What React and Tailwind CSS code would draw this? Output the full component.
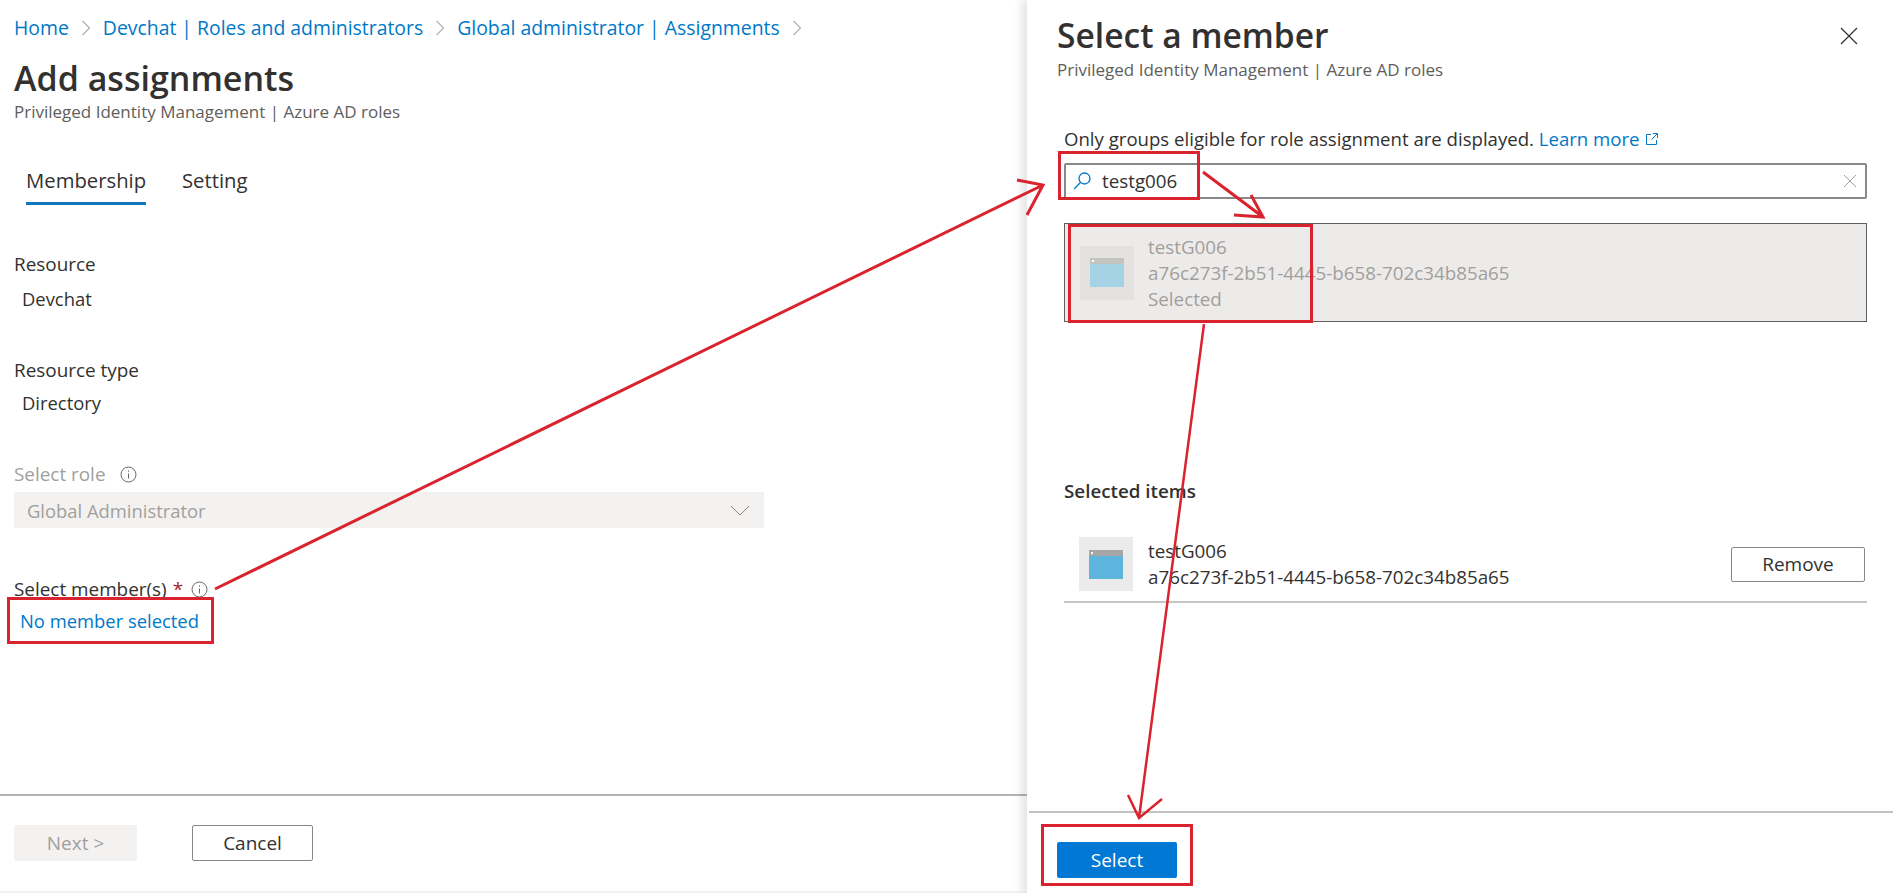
const RED = "#d9232e";

function Tile({ faded }) {
  return (
    <div className={`w-[54px] h-[54px] shrink-0 flex items-center justify-center ${faded ? "bg-[#e3e2e0]" : "bg-[#ebebeb]"}`}>
      <svg width="34" height="29" viewBox="0 0 34 29">
        <rect width="34" height="29" fill={faded ? "#a6d2e6" : "#5db4dd"} />
        <rect width="34" height="6" fill={faded ? "#c3c3c2" : "#a6a6a6"} />
        <rect x="2" y="2" width="2" height="2" fill="#fff" />
      </svg>
    </div>
  );
}

function Info({ className }) {
  return (
    <svg className={className} width="17" height="17" viewBox="0 0 17 17" fill="none" stroke="#666">
      <circle cx="8.5" cy="8.5" r="7.5" />
      <path d="M8.5 7.5v5M8.5 4.5v1.2" />
    </svg>
  );
}

function Chevron() {
  return (
    <svg width="10" height="18" viewBox="0 0 10 18" fill="none" stroke="#777" strokeWidth="1">
      <path d="M1.5 2l7 7-7 7" />
    </svg>
  );
}

function Crumb({ children }) {
  return <span className="text-[#0078c8]">{children}</span>;
}

export default function App() {
  return (
    <div className="relative flex h-[893px] w-[1893px] overflow-hidden bg-white text-[#323130] font-['Open_Sans','Noto_Sans',sans-serif] text-[18.4px] leading-[22px]">
      {/* Left page */}
      <div className="flex flex-col w-[1027px] shrink-0 border-b-2 border-[#f2f2f2]">
        <div className="flex-1 pl-[14px]">
          <div className="flex items-center gap-[12px] mt-[17px] h-[22px] text-[19.4px]">
            <Crumb>Home</Crumb><Chevron />
            <Crumb>Devchat | Roles and administrators</Crumb><Chevron />
            <Crumb>Global administrator | Assignments</Crumb><Chevron />
          </div>
          <h1 className="mt-[18px] text-[34px] leading-[42px] font-semibold">Add assignments</h1>
          <p className="mt-[2px] text-[#605e5c] text-[17px]">Privileged Identity Management | Azure AD roles</p>
          <div className="flex gap-[36px] ml-[12px] mt-[44px] text-[20.3px]">
            <div className="pb-[9px] border-b-[3px] border-[#0f75bd] leading-[26px] w-[120px]">Membership</div>
            <div className="leading-[26px]">Setting</div>
          </div>
          <div className="mt-[48px] font-medium text-[18.9px]">Resource</div>
          <div className="ml-[8px] mt-[13px]">Devchat</div>
          <div className="mt-[49px] font-medium text-[18.9px]">Resource type</div>
          <div className="ml-[8px] mt-[11px]">Directory</div>
          <div className="flex items-center gap-[14px] mt-[49px] font-medium text-[18.9px] text-[#a19f9d]">Select role <Info /></div>
          <div className="flex items-center justify-between mt-[7px] w-[750px] h-[36px] bg-[#f3f2f1] pl-[13px] pr-[14px] text-[#a19f9d]">
            <span className="mt-[1px]">Global Administrator</span>
            <svg width="20" height="11" viewBox="0 0 20 11" fill="none" stroke="#8a8886"><path d="M1 1l9 9 9-9" /></svg>
          </div>
          <div className="flex items-center gap-[6px] mt-[50px] font-medium text-[18.9px]">Select member(s) <span className="text-[#a4262c]">*</span> <Info className="ml-[2px]" /></div>
          <div className="ml-[6px] mt-[10px] text-[#0078c8]">No member selected</div>
        </div>
        <div className="flex gap-[55px] h-[97px] pl-[14px] pt-[29px] border-t-2 border-[#b3b3b3] text-[19px]">
          <div className="flex items-center justify-center w-[123px] h-[36px] bg-[#f3f2f1] text-[#a19f9d] font-medium rounded-[2px]">Next &gt;</div>
          <div className="flex items-center justify-center w-[121px] h-[36px] border border-[#8a8886] rounded-[2px] font-medium">Cancel</div>
        </div>
      </div>

      {/* Right blade */}
      <div className="flex flex-col flex-1 shadow-[-6px_0_8px_rgba(0,0,0,0.1)] pl-[2px]">
        <div className="flex-1 pl-[28px] pr-[26px]">
          <div className="flex items-start justify-between pt-[12px] pr-[9px]">
            <h2 className="text-[33.6px] leading-[46px] font-semibold">Select a member</h2>
            <svg className="mt-[15px]" width="18" height="18" viewBox="0 0 18 18" fill="none" stroke="#323130" strokeWidth="1.2"><path d="M1 1l16 16M17 1L1 17" /></svg>
          </div>
          <p className="mt-[1px] text-[#605e5c] text-[17px]">Privileged Identity Management | Azure AD roles</p>
          <div className="ml-[7px]">
            <div className="mt-[47px] flex items-center text-[18.6px]">
              Only groups eligible for role assignment are displayed.&nbsp;<span className="text-[#0078c8]">Learn more</span>
              <svg className="ml-[5px]" width="14" height="14" viewBox="0 0 14 14" fill="none" stroke="#0078c8"><path d="M6 2.5H1.5v10h10V8M8 1.5h4.500v4.500M12 2L6.500 7.500" /></svg>
            </div>
            <div className="flex items-center mt-[13px] h-[36px] border-2 border-[#8a8886] rounded-[2px] pl-[6px] pr-[8px]">
              <svg width="20" height="20" viewBox="0 0 20 20" fill="none" stroke="#0078c8" strokeWidth="1.300"><circle cx="12.500" cy="7.500" r="5.500" /><path d="M8.500 11.500L2 18" /></svg>
              <span className="ml-[10px] flex-1 text-[18.8px]">testg006</span>
              <svg width="14" height="14" viewBox="0 0 14 14" fill="none" stroke="#a19f9d"><path d="M1 1l12 12M13 1L1 13" /></svg>
            </div>
            <div className="flex items-center gap-[14px] mt-[24px] h-[99px] border border-[#605e5c] bg-[#edebe9] pl-[15px] text-[#a19f9d] text-[18.8px] leading-[26px]">
              <Tile faded />
              <div>
                <div>testG006</div>
                <div>a76c273f-2b51-4445-b658-702c34b85a65</div>
                <div>Selected</div>
              </div>
            </div>
            <div className="mt-[158px] font-semibold text-[18.8px]">Selected items</div>
            <div className="flex items-center gap-[15px] mt-[35px] pl-[15px] pb-[10px] border-b-2 border-[#c8c6c4]">
              <Tile />
              <div className="flex-1 text-[18.8px] leading-[26px]">
                <div>testG006</div>
                <div>a76c273f-2b51-4445-b658-702c34b85a65</div>
              </div>
              <div className="flex items-center justify-center w-[134px] h-[35px] mr-[2px] border border-[#8a8886] rounded-[2px] font-medium text-[19px]">Remove</div>
            </div>
          </div>
        </div>
        <div className="h-[82px] pl-[28px] pt-[29px] border-t-2 border-[#c2c2c2]">
          <div className="flex items-center justify-center w-[120px] h-[36px] bg-[#0078d4] rounded-[2px] text-white font-medium text-[19px]">Select</div>
        </div>
      </div>

      {/* Red annotations drawn over the page */}
      <div className="absolute left-[7px] top-[597px] w-[207px] h-[47px] border-[3px] border-[#d9232e]" />
      <div className="absolute left-[1058px] top-[151px] w-[142px] h-[49px] border-[3px] border-[#d9232e]" />
      <div className="absolute left-[1068px] top-[224px] w-[245px] h-[99px] border-[3px] border-[#d9232e]" />
      <div className="absolute left-[1041px] top-[824px] w-[152px] h-[62px] border-[3px] border-[#d9232e]" />
      <svg className="absolute left-0 top-0" width="1893" height="893" fill="none" stroke={RED} strokeWidth="3">
        <path d="M215 589L1043 185M1017 180L1043 185L1027 215" />
        <path d="M1203 172L1263 217M1251 195L1263 217L1234 215" />
        <path d="M1204 324L1139 818M1128 795L1139 818L1162 799" strokeWidth="2.500" />
      </svg>
    </div>
  );
}
